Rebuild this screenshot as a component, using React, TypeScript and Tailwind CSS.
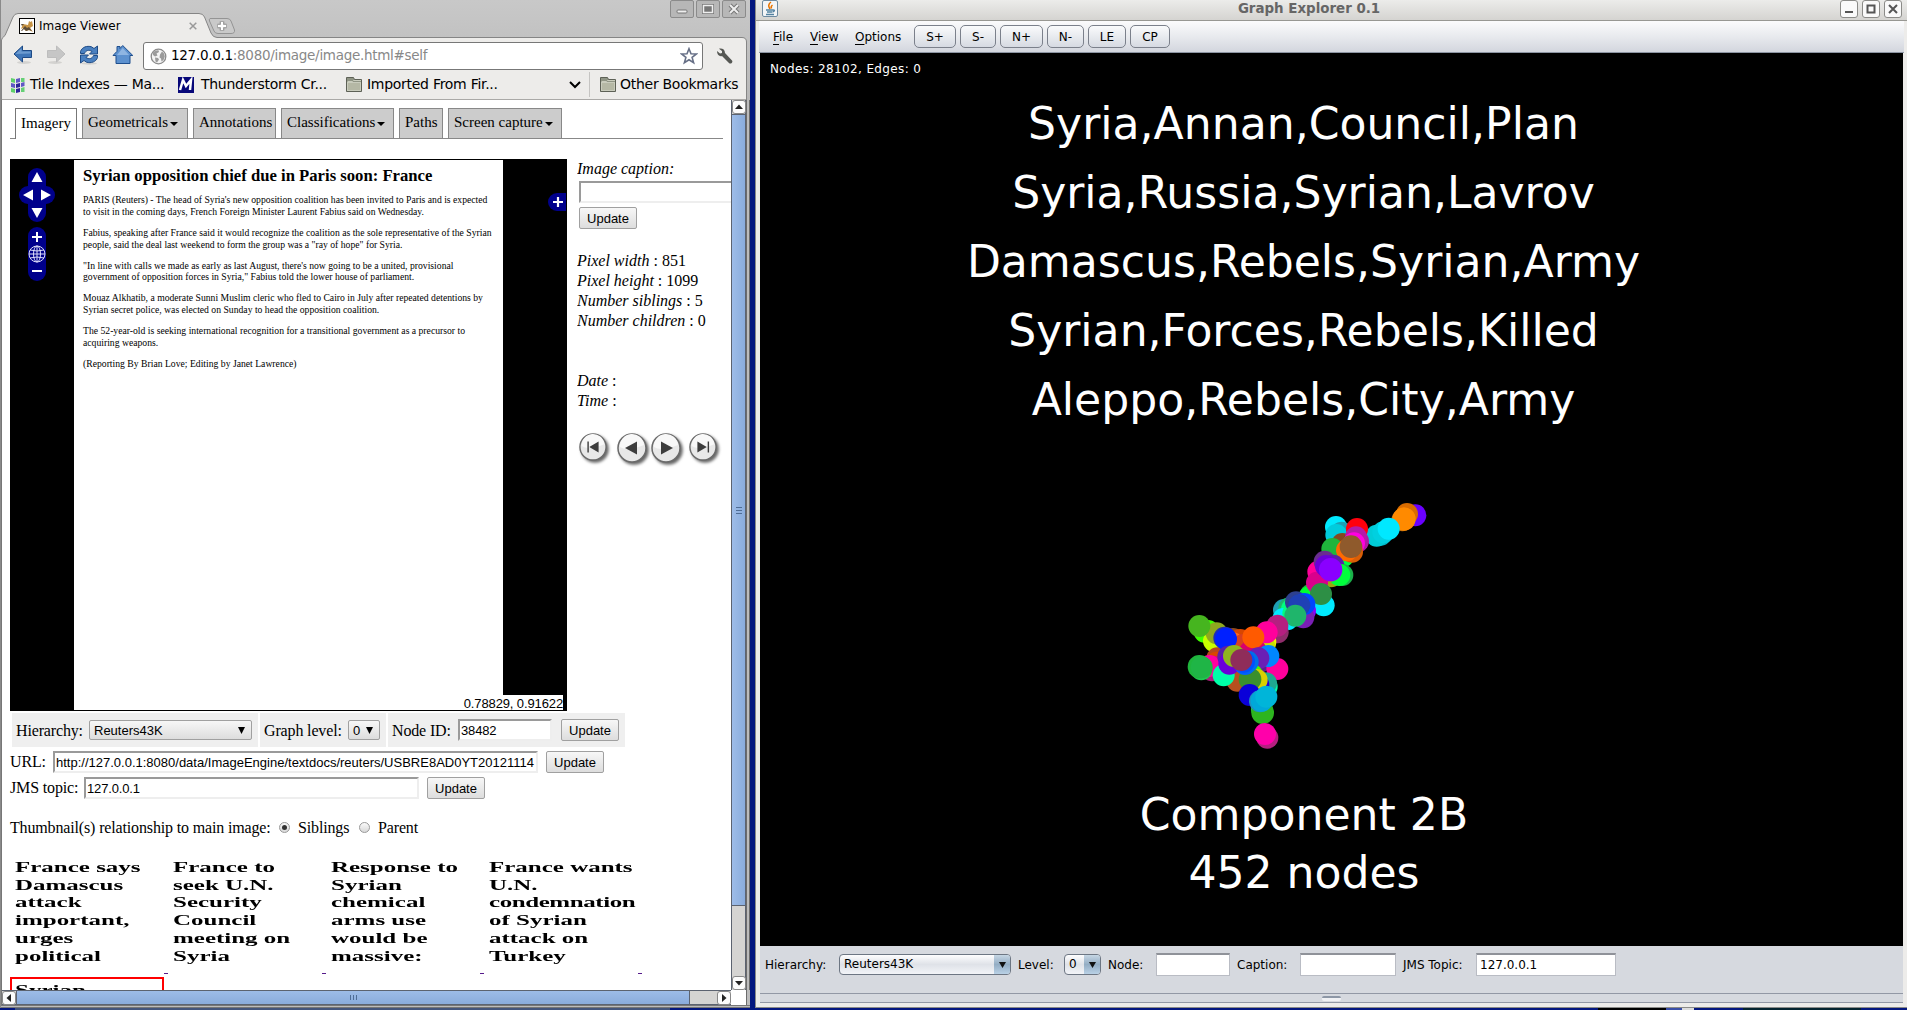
import React from "react";

const serif = "font-['Liberation_Serif',serif]";
const arial = "font-['Liberation_Sans',sans-serif]";
const dejavu = "font-['DejaVu_Sans',sans-serif]";

function Folder() {
  return (
    <svg width="16" height="15" viewBox="0 0 16 15" className="shrink-0">
      <path d="M.5 14.5V.5h7l1 2h7v12z" fill="#8f9484" stroke="#5d6156" />
      <path d="M1.5 4.500h5l1-1h7.500" fill="none" stroke="#c9ccbd" />
      <rect x="1.500" y="5.500" width="13" height="8" fill="#b5b8a5" stroke="#c9ccbd" />
    </svg>
  );
}

function Globe() {
  return (
    <svg width="17" height="17" viewBox="0 0 17 17" className="shrink-0">
      <circle cx="8.500" cy="8.500" r="7.300" fill="#f4f4f4" stroke="#8b8b8b" strokeWidth="1.300" />
      <path d="M3 4.500Q5 2 8.500 2.200L9 4 6.500 5.500 7.500 7.500 5 8.500 3 7zM5 9.500l3 .5 1 1.500-2 3-1.500-1zM10 6.500l2-3 2 2 .8 3-1.300 3.500-2 1.500-.5-3-1.500-1z" fill="#9b9b9b" />
    </svg>
  );
}

function BackArrow({ muted = false }: { muted?: boolean }) {
  return (
    <svg width="20" height="20" viewBox="0 0 20 20" className={muted ? "shrink-0 -scale-x-100" : "shrink-0"}>
      <ellipse cx="11" cy="17.500" rx="7" ry="1.500" fill="#d3d2d0" />
      <path d="M1 9L9.500 1v4.500h9v7h-9V17z" fill={muted ? "#c6c6c6" : "#3f76b8"} stroke={muted ? "#bdbdbd" : "#1d4a86"} />
      {!muted && <path d="M2.500 9L8.500 3.300v3.200h9v2z" fill="#6c9bd0" />}
    </svg>
  );
}

function Reload() {
  return (
    <svg width="20" height="20" viewBox="0 0 20 20" className="shrink-0">
      <ellipse cx="10" cy="18.500" rx="8" ry="1.200" fill="#d3d2d0" />
      <path d="M1.500 8.500V6.500C3 2 8 .5 12.500 1.800L15 3.500 18.500 1v8h-8L13 6.500C10 4.500 7 5 5.500 8.500z" fill="#4a80c0" stroke="#1d4a86" />
      <path d="M18.500 10.500v2c-1.500 4.500-6.500 6-11 4.700L5 15.500 1.500 18v-8h8L7 12.500c3 2 6 1.500 7.500-2z" fill="#4a80c0" stroke="#1d4a86" />
    </svg>
  );
}

function House() {
  return (
    <svg width="22" height="20" viewBox="0 0 22 20" className="shrink-0">
      <path d="M4 18.500v-8H1L5 6.300V1.500h3v2l2.700-3L20.800 10.500H18v8z" fill="#5d91cf" stroke="#1f4f8e" />
      <path d="M5 10l5.700-7 6.300 7z" fill="#8fb5e2" />
    </svg>
  );
}

function Wrench() {
  return (
    <svg width="17" height="17" viewBox="0 0 17 17" className="shrink-0">
      <path d="M1 3l3 2.500L6 5V3L3 .8C6 0 9 1.500 9 5l7 7.500c1.300 1.500-1 4-2.800 2.700L6 8C3.500 9 1 6.500 1 3z" fill="#555753" />
    </svg>
  );
}

function FavCat() {
  return (
    <svg width="16" height="16" viewBox="0 0 16 16" className="shrink-0">
      <rect x=".5" y=".5" width="15" height="15" fill="#fff" stroke="#000" />
      <path d="M2 11l2-5 5 1 1-4 1.500 1L13 3l1 5-3 2 3 4-4-2-3 1-3-3z" fill="#c69345" />
      <path d="M2 13l4-5 2 2 2-1 3 4-3-1-3 1-2-2-2 2zM2 6l3 0-2 2z" fill="#5b4b38" />
    </svg>
  );
}

function Tiles() {
  return (
    <svg width="14" height="16" viewBox="0 0 14 16" className="shrink-0">
      <path d="M0 1l4 1v4L0 5zM0 11l4 1v4l-4-1z" fill="#5fd06a" />
      <path d="M0 6l4 1v4l-4-1zM5 2l4-1v4L5 6zM10 6l3.500-1v4L10 10z" fill="#5f57c4" />
      <path d="M5 7l4-1v4l-4 1zM5 12l4-1v4l-4 1z" fill="#2d2499" />
      <path d="M10 1l3.500 0v4L10 5zM10 11l3.500-1v5l-3.500 0z" fill="#65cf75" />
    </svg>
  );
}

function WinButton({ kind }: { kind: "min" | "max" | "close" }) {
  return (
    <div className="flex h-[18px] w-6 items-center justify-center rounded-[2px] border border-[#8b8b8b] bg-[#b7b7b7]">
      <svg width="14" height="12" viewBox="0 0 14 12">
        {kind === "min" && <rect x="2" y="7" width="10" height="3" rx="1" fill="#eee" stroke="#777" />}
        {kind === "max" && <path d="M2.500 2.500h9v7h-9zM5 5h4v2H5z" fill="none" stroke="#777" strokeWidth="3" />}
        {kind === "max" && <path d="M2.500 2.500h9v7h-9z" fill="none" stroke="#eee" strokeWidth="1.500" />}
        {kind === "close" && <path d="M3 2l8 8M11 2l-8 8" stroke="#777" strokeWidth="4" />}
        {kind === "close" && <path d="M3 2l8 8M11 2l-8 8" stroke="#eee" strokeWidth="2" />}
      </svg>
    </div>
  );
}

function ChromeHeader() {
  return (
    <div className="relative h-[100px] bg-[#bcbcbc] bg-linear-to-b from-[#c8c8c8] to-[#b8b8b8]">
      <svg width="750" height="100" viewBox="0 0 750 100" className="absolute inset-0">
        <path d="M1.500 100V40Q2 37.500 5 35.500L13 17Q14.500 13.500 18 13.500H199Q203 13.500 204.500 17L211 33Q213 37.500 217 37.500H742Q746.500 37.500 746.500 42V100z" fill="#edecea" stroke="#858585" />
        <path d="M210 18.500H227Q230 18.500 231 21L234.500 30Q235 33.500 231 33.500H218Q215 33.500 214 31L209.500 21Q209 18.500 210 18.500z" fill="#c9c9c9" stroke="#949494" />
        <path d="M222 21.500v9M217.500 26h9" stroke="#888" strokeWidth="4.500" />
        <path d="M222 22v8M218 26h8" stroke="#fff" strokeWidth="2.400" />
        <path d="M2 99.500H746" stroke="#aaa9a7" />
      </svg>
      <div className={`relative flex h-full flex-col ${dejavu}`}>
        <div className="flex h-[38px]">
          <div className="flex w-[198px] items-center pt-[14px] pl-[19px]">
            <FavCat />
            <span className="ml-1 w-[150px] text-[12px] tracking-[-0.05px] whitespace-nowrap">Image Viewer</span>
            <svg width="8" height="8" viewBox="0 0 8 8" className="shrink-0">
              <path d="M.7.7l6.600 6.600M7.300.7L.7 7.300" stroke="#999" strokeWidth="1.500" />
            </svg>
          </div>
          <div className="ml-auto flex gap-[2px] pr-1">
            <WinButton kind="min" />
            <WinButton kind="max" />
            <WinButton kind="close" />
          </div>
        </div>
        <div className="flex h-[32px] items-end pl-[13px]">
          <div className="flex h-[25px] gap-[13px]">
            <BackArrow />
            <BackArrow muted />
            <Reload />
            <House />
          </div>
          <div className="ml-[9px] flex h-[28px] w-[560px] items-center rounded-[3px] border border-[#777] bg-white pl-[6px]">
            <Globe />
            <span className="ml-[4px] pb-px text-[13.500px] tracking-[-0.29px] whitespace-nowrap text-[#888]">
              <span className="text-black">127.0.0.1</span>:8080/image/image.html#self
            </span>
            <svg width="18" height="18" viewBox="0 0 18 18" className="mr-1 ml-auto">
              <path d="M9 1.700l2 5 5.300.3-4.200 3.400 1.500 5.300L9 12.800l-4.600 2.900 1.500-5.300L1.700 7 7 6.700z" fill="#fff" stroke="#666f86" strokeWidth="1.600" />
            </svg>
          </div>
          <div className="h-[22px] pl-[13px]"><Wrench /></div>
        </div>
        <div className="flex h-[29px] items-center pl-[11px] text-[14px] tracking-[-0.28px] whitespace-nowrap">
          <div className="flex w-[167px] items-center gap-[5px]"><Tiles />Tile Indexes — Ma...</div>
          <div className="flex w-[168px] items-center gap-[7px]">
            <svg width="16" height="16" viewBox="0 0 16 16" className="shrink-0">
              <rect width="16" height="16" fill="#080879" />
              <path d="M2 13L5 3l3 6 5-6-1 10" fill="none" stroke="#fff" strokeWidth="2.500" />
            </svg>
            Thunderstorm Cr...
          </div>
          <div className="flex w-[223px] items-center gap-[5px]"><Folder />Imported From Fir...</div>
          <svg width="12" height="8" viewBox="0 0 12 8"><path d="M1 1l5 5 5-5" fill="none" stroke="#000" strokeWidth="2" /></svg>
          <div className="ml-[8px] h-[25px] w-px bg-[#c5c4c2]" />
          <div className="ml-[10px] flex items-center gap-[4px]"><Folder />Other Bookmarks</div>
        </div>
      </div>
    </div>
  );
}

const tabs = [
  { label: "Imagery", menu: false, width: "w-[62px]" },
  { label: "Geometricals", menu: true, width: "w-[106px]" },
  { label: "Annotations", menu: false, width: "w-[83px]" },
  { label: "Classifications", menu: true, width: "w-[113px]" },
  { label: "Paths", menu: false, width: "w-[44px]" },
  { label: "Screen capture", menu: true, width: "w-[114px]" },
];

function PageTabs() {
  return (
    <div className="flex h-[31px] w-[713px] border-b border-[#888] pl-[5px]">
      {tabs.map((t, i) => (
        <div
          key={t.label}
          className={`mr-[5px] flex items-center pb-[2px] pl-[5px] text-[15px] whitespace-nowrap ${t.width} ${
            i === 0 ? "h-[31px] border border-b-0 border-[#777] bg-white" : "h-[30px] border border-b-0 border-[#888] bg-[#ccc]"
          }`}
        >
          {t.label}
          {t.menu && <svg width="8" height="4" viewBox="0 0 8 4" className="mt-[2px] ml-[2px]"><path d="M0 0h8L4 4z" /></svg>}
        </div>
      ))}
    </div>
  );
}

function Update() {
  return (
    <div className={`flex h-[22px] w-[58px] items-center justify-center rounded-[2px] border border-[#a0a0a0] bg-linear-to-b from-[#f7f7f7] to-[#dddddd] pt-px text-[13px] ${arial}`}>
      Update
    </div>
  );
}

function Field({ className, children }: { className: string; children?: React.ReactNode }) {
  return (
    <div className={`flex items-center overflow-hidden border-2 border-t-[#9a9a9a] border-r-[#eee] border-b-[#eee] border-l-[#9a9a9a] bg-white pt-px pl-px text-[13px] whitespace-nowrap ${arial} ${className}`}>
      {children}
    </div>
  );
}

function Select({ className, children }: { className: string; children: React.ReactNode }) {
  return (
    <div className={`flex h-[20px] items-center justify-between rounded-[2px] border border-[#a0a0a0] bg-linear-to-b from-[#f7f7f7] to-[#dddddd] text-[13px] ${arial} ${className}`}>
      <span className="pt-px">{children}</span>
      <svg width="7" height="7" viewBox="0 0 7 7"><path d="M0 0h7L3.500 7z" /></svg>
    </div>
  );
}

function PanZoom() {
  return (
    <svg width="64" height="140" viewBox="0 0 64 140">
      <g fill="#00008b">
        <rect x="18" y="8" width="18" height="54" rx="9" />
        <rect x="9" y="26" width="36" height="18" rx="9" />
        <rect x="18" y="67" width="18" height="54" rx="9" />
      </g>
      <path d="M27 12l5.500 10h-11zM27 58l5.500-10h-11zM13 35l10-5.500v11zM41 35l-10-5.500v11z" fill="#fff" />
      <path d="M22 77h10M27 72v10M22 111h10" stroke="#fff" strokeWidth="2" />
      <g fill="none" stroke="#dcdcf8" strokeWidth="1">
        <circle cx="27" cy="94" r="8" />
        <ellipse cx="27" cy="94" rx="3.500" ry="8" />
        <path d="M27 86v16M19 94h16M20 90q7 2 14 0M20 98q7-2 14 0" />
      </g>
    </svg>
  );
}

const story = [
  ["PARIS (Reuters) - The head of Syria's new opposition coalition has been invited to Paris and is expected", "to visit in the coming days, French Foreign Minister Laurent Fabius said on Wednesday."],
  ["Fabius, speaking after France said it would recognize the coalition as the sole representative of the Syrian", "people, said the deal last weekend to form the group was a \"ray of hope\" for Syria."],
  ["\"In line with calls we made as early as last August, there's now going to be a united, provisional", "government of opposition forces in Syria,\" Fabius told the lower house of parliament."],
  ["Mouaz Alkhatib, a moderate Sunni Muslim cleric who fled to Cairo in July after repeated detentions by", "Syrian secret police, was elected on Sunday to head the opposition coalition."],
  ["The 52-year-old is seeking international recognition for a transitional government as a precursor to", "acquiring weapons."],
  ["(Reporting By Brian Love; Editing by Janet Lawrence)"],
];

function Viewer() {
  return (
    <div className="relative flex h-[552px] w-[557px] border-y border-black bg-black">
      <div className="w-[64px]"><PanZoom /></div>
      <div className="h-[550px] w-[429px] bg-white pl-[9px]">
        <h1 className="mt-[5px] h-[21px] text-[16.670px] leading-[21px] font-bold whitespace-nowrap">Syrian opposition chief due in Paris soon: France</h1>
        <div className="mt-[8px] flex flex-col gap-[9.200px] text-[9.680px] leading-[11.800px] whitespace-nowrap">
          {story.map((p) => (
            <p key={p[0]}>{p.map((l) => <span key={l} className="block">{l}</span>)}</p>
          ))}
        </div>
      </div>
      <div className="mt-[33px] ml-[45px] flex h-[18px] w-[18px] items-center justify-center rounded-l-full bg-[#00008b] pl-[2px]">
        <svg width="10" height="10"><path d="M0 5h10M5 0v10" stroke="#fff" strokeWidth="2.200" /></svg>
      </div>
      <div className={`absolute right-1 bottom-0 h-[15px] bg-white text-[13px] leading-[17px] tracking-[-0.12px] ${arial}`}>0.78829, 0.91622</div>
    </div>
  );
}

function Round({ size, d }: { size: number; d: string }) {
  return (
    <svg width={size} height={size} viewBox="0 0 30 30" className="shrink-0 overflow-visible drop-shadow-[2px_2px_1.500px_#666]">
      <circle cx="15" cy="15" r="14" fill="#e8e8e8" stroke="#6b6b6b" strokeWidth="1.500" />
      <path d="M3 14Q10 19 27 12A12 12 0 0 0 3 14" fill="#f8f8f8" />
      <path d={d} fill="#3d3d3d" />
    </svg>
  );
}

function SidePanel() {
  return (
    <div className="ml-[10px] w-[154px] overflow-hidden text-[16px] leading-5 whitespace-nowrap">
      <div className="h-[22px] italic">Image caption:</div>
      <Field className="ml-[2px] h-[22px] w-[170px]" />
      <div className="mt-[4px] ml-[2px]"><Update /></div>
      <div className="mt-[22px]">
        <div><i>Pixel width</i> : 851</div>
        <div><i>Pixel height</i> : 1099</div>
        <div><i>Number siblings</i> : 5</div>
        <div><i>Number children</i> : 0</div>
      </div>
      <div className="mt-[40px]">
        <div><i>Date</i> :</div>
        <div><i>Time</i> :</div>
      </div>
      <div className="mt-[17px] flex h-[38px] items-center pl-[2px]">
        <Round size={28} d="M9 9h1.500v12H9zM21 9v12l-10-6z" />
        <div className="ml-[10px] flex gap-[4px] pt-[2px]">
          <Round size={30} d="M20 8.500v13L8 15z" />
          <Round size={30} d="M10 8.500v13L22 15z" />
        </div>
        <div className="ml-[8px]"><Round size={28} d="M20 9h1.500v12H20zM9 9v12l10-6z" /></div>
      </div>
    </div>
  );
}

function Radio({ on = false }: { on?: boolean }) {
  return (
    <div className="mb-[2px] flex h-[11px] w-[11px] items-center justify-center rounded-full border border-[#999] bg-linear-to-b from-[#fafafa] to-[#d8d8d8]">
      {on && <div className="h-[5px] w-[5px] rounded-full bg-[#333]" />}
    </div>
  );
}

function Controls() {
  return (
    <div className="text-[16px] tracking-[-0.15px] whitespace-nowrap">
      <div className="mt-[2px] flex h-[34px] gap-[2px] pl-[2px]">
        <div className="flex w-[246px] items-center bg-[#efefef] pl-[4px]">
          <span className="w-[73px] pt-px">Hierarchy:</span>
          <Select className="w-[163px] tracking-normal pr-[6px] pl-[4px]">Reuters43K</Select>
        </div>
        <div className="flex w-[126px] items-center bg-[#efefef] pl-[4px]">
          <span className="w-[84px] pt-px">Graph level:</span>
          <Select className="w-[32px] tracking-normal pr-[6px] pl-[4px]">0</Select>
        </div>
        <div className="flex w-[237px] items-center bg-[#efefef] pl-[4px]">
          <span className="w-[66px] pt-px">Node ID:</span>
          <Field className="h-[22px] w-[94px]">38482</Field>
          <div className="ml-[9px] tracking-normal"><Update /></div>
        </div>
      </div>
      <div className="mt-[4px] flex h-[22px] items-center">
        <span className="w-[43px]">URL:</span>
        <Field className="h-[22px] w-[485px] tracking-normal">http://127.0.0.1:8080/data/ImageEngine/textdocs/reuters/USBRE8AD0YT20121114</Field>
        <div className="ml-[8px] tracking-normal"><Update /></div>
      </div>
      <div className="mt-[4px] flex h-[22px] items-center">
        <span className="w-[74px]">JMS topic:</span>
        <Field className="h-[22px] w-[335px]">127.0.0.1</Field>
        <div className="ml-[8px] tracking-normal"><Update /></div>
      </div>
      <div className="mt-[18px] flex h-[22px] items-center">
        <span className="w-[269px]">Thumbnail(s) relationship to main image:</span>
        <Radio on />
        <span className="w-[69px] pl-[8px]">Siblings</span>
        <Radio />
        <span className="pl-[8px]">Parent</span>
      </div>
    </div>
  );
}

const thumbs = [
  ["France says", "Damascus", "attack", "important,", "urges", "political"],
  ["France to", "seek U.N.", "Security", "Council", "meeting on", "Syria"],
  ["Response to", "Syrian", "chemical", "arms use", "would be", "massive:"],
  ["France wants", "U.N.", "condemnation", "of Syrian", "attack on", "Turkey"],
];

function Thumbs() {
  return (
    <div className="mt-[18px] font-bold">
      <div className="flex h-[120px]">
        {thumbs.map((lines) => (
          <div key={lines[0]} className="flex h-[117px] w-[158px] justify-between pl-[4.500px]">
            <div className="w-[80px] origin-left scale-x-[1.665] pt-[2px] text-[15px] leading-[17.700px] whitespace-nowrap">
              {lines.map((l) => <div key={l} className={l === "condemnation" ? "tracking-[-0.250px]" : ""}>{l}</div>)}
            </div>
            <div className="mt-[116px] h-px w-[4px] shrink-0 bg-[#551a8b]" />
          </div>
        ))}
      </div>
      <div className="h-[30px] w-[154px] border-2 border-[#f00] bg-white pt-[3px] pl-[3px]">
        <div className="w-[80px] origin-left scale-x-[1.665] text-[15px] leading-[17px]">Syrian</div>
      </div>
    </div>
  );
}

function ArrowBox({ d }: { d: string }) {
  return (
    <div className="flex h-[14px] w-[14px] shrink-0 items-center justify-center rounded-[3px] border border-[#888] bg-[#fcfcfc]">
      <svg width="8" height="8" viewBox="0 0 8 8" className="shrink-0"><path d={d} fill="#222" /></svg>
    </div>
  );
}

function Browser() {
  return (
    <div className="flex h-[1008px] w-[750px] flex-col overflow-hidden border-l border-[#8a8a8a] bg-[#bcbcbc]">
      <div className="-ml-px"><ChromeHeader /></div>
      <div className="flex h-[890px] border-l border-[#777]">
        <div className={`h-[890px] w-[729px] overflow-hidden bg-white pt-[8px] pl-[8px] text-black ${serif}`}>
          <PageTabs />
          <div className="mt-[20px] flex">
            <Viewer />
            <SidePanel />
          </div>
          <Controls />
          <Thumbs />
        </div>
        <div className="flex w-[15px] flex-col items-center border-x border-[#5c6370] bg-[#d5d4d2]">
          <ArrowBox d="M4 1.500l4 4.500H0z" />
          <div className="flex h-[792px] w-full items-center justify-center border-y border-[#5c6370] bg-linear-to-r from-[#9dbce8] to-[#8aacdc]">
            <div className="h-[7px] w-[6px] border-y border-[#4f6d96]"><div className="mt-[2px] h-px bg-[#4f6d96]" /></div>
          </div>
          <div className="flex-1" />
          <ArrowBox d="M0 2h8L4 6.500z" />
        </div>
        <div className="flex-1 border-x border-[#6b6b6b] bg-[#bcbcbc]" />
      </div>
      <div className="flex h-[15px] border-l border-[#777] bg-white">
        <div className="flex w-[729px] items-center border-y border-[#5c6370] bg-[#d5d4d2]">
          <ArrowBox d="M6 0v8L1.500 4z" />
          <div className="flex h-full w-[674px] items-center justify-center border-x border-[#5c6370] bg-linear-to-b from-[#9dbce8] to-[#8aacdc]">
            <div className="h-[5px] w-[7px] border-x border-[#4f6d96]"><div className="ml-[2px] h-full w-px bg-[#4f6d96]" /></div>
          </div>
          <div className="flex-1" />
          <ArrowBox d="M2 0v8l4.500-4z" />
        </div>
        <div className="ml-auto w-[4px] border-l border-[#6b6b6b] bg-[#bcbcbc]" />
      </div>
      <div className="h-[3px] border-y border-[#777] bg-[#bcbcbc]" />
    </div>
  );
}

type Node = [number, number, string, number?];
const nodes: Node[] = [
  [736, 106, "#6a00ff"], [711, 102, "#d96c00"], [697, 121, "#b36b12"], [702, 117, "#ff8a00", 35],
  [632, 164, "#00b8c8"], [620, 167, "#00ccd8"], [640, 157, "#00d0e0"], [656, 146, "#00e8ff"],
  [498, 141, "#00eaff"], [515, 158, "#1ba0b5"], [499, 165, "#00ccdd"],
  [520, 228, "#00ff40"], [517, 192, "#85481f"], [561, 147, "#ff000c"], [564, 184, "#b01aa0"], [558, 172, "#b51aa8"], [552, 190, "#ff00e0"],
  [487, 207, "#1fb53c"], [546, 215, "#d95d06"], [531, 211, "#ff6a00"], [543, 200, "#8f5a2c", 34],
  [445, 275, "#ff0099"], [464, 245, "#6a2d8f"], [490, 257, "#5a1fa8"], [517, 285, "#1bb04a"],
  [483, 289, "#9aa80f"], [508, 285, "#00ff3c"], [475, 274, "#b58f1f"], [422, 345, "#1fb53c"], [418, 352, "#00ff30"],
  [441, 308, "#d9008c"], [468, 258, "#6a00d9"], [482, 269, "#8a00ff", 35],
  [461, 376, "#00eaff"], [453, 342, "#2d8f45"],
  [342, 390, "#1fa0b5"], [358, 385, "#1fb56b"], [366, 388, "#00ff80"], [340, 417, "#00eaff"], [352, 418, "#00eaff"],
  [370, 400, "#00ff80"], [405, 392, "#8a00ff"], [400, 412, "#7a1fb5"], [378, 367, "#2d408f"], [403, 372, "#0046ff"], [388, 376, "#1f40b5"], [376, 407, "#1fb56b"],
  [323, 457, "#8f2d6b"], [322, 437, "#b51f80"],
  [114, 453, "#40ff00"], [104, 455, "#40ff00"], [286, 486, "#f2f200"], [283, 500, "#c8e000"],
  [132, 483, "#c8ff00"], [140, 460, "#8fa81f"], [88, 438, "#46b51f"],
  [189, 477, "#8f4a1f"], [211, 480, "#d94600"], [188, 490, "#ff6a1f"], [142, 535, "#b5461f"], [140, 548, "#d94600"], [128, 560, "#d90086"], [126, 571, "#a81f7a"], [118, 558, "#ff00a0"],
  [220, 495, "#d9401f"], [240, 515, "#d9006b"], [256, 510, "#d9006b"], [290, 457, "#ff009c"], [250, 472, "#ff5a00"], [164, 474, "#1f2db5", 34], [168, 477, "#0020ff"],
  [270, 545, "#5a1f8f"], [322, 567, "#ff009c"], [295, 528, "#0086ff"], [265, 535, "#6a1fb5"],
  [202, 602, "#b5501f"], [161, 586, "#00ffa8"], [175, 530, "#5a1fa8"], [178, 551, "#6a00d9"],
  [94, 568, "#1fc850"], [88, 560, "#1fb53c", 35], [95, 562, "#1fb546"],
  [290, 620, "#00ffa8"], [288, 610, "#1fa88f"], [265, 615, "#2000d9"], [246, 585, "#40ff00"], [260, 600, "#d9d000"], [240, 598, "#3a8f2d", 34],
  [225, 552, "#0060ff"], [233, 545, "#0070e8"], [192, 528, "#8fb51f"], [222, 545, "#0050ff"], [214, 540, "#8f2d5a"],
  [276, 688, "#1fd040"], [278, 698, "#2db51f", 34], [239, 645, "#0a00d9"], [270, 664, "#1f90c0"], [275, 662, "#00a8d9"], [289, 650, "#00b5d9"],
  [292, 773, "#b51f80"], [285, 762, "#ff00aa"],
];

const topics = [
  "Syria,Annan,Council,Plan",
  "Syria,Russia,Syrian,Lavrov",
  "Damascus,Rebels,Syrian,Army",
  "Syrian,Forces,Rebels,Killed",
  "Aleppo,Rebels,City,Army",
];

function Canvas() {
  return (
    <div className="flex h-[893px] w-[1143px] flex-col overflow-hidden bg-black text-white">
      <div className="h-[36px] pt-[8px] pl-[10px] text-[12px] leading-[16px] tracking-[0.370px]">Nodes: 28102, Edges: 0</div>
      <div className="w-[1087px] text-center text-[44.100px] leading-[69px] whitespace-nowrap">
        {topics.map((t) => <div key={t}>{t}</div>)}
      </div>
      <svg width="280" height="280" viewBox="0 0 840 840" className="mt-[46px] ml-[410px] shrink-0">
        {nodes.map(([x, y, c, r], i) => <circle key={i} cx={x} cy={y} r={r ?? 33} fill={c} />)}
      </svg>
      <div className="mt-[26px] w-[1088px] text-center text-[44.100px] leading-[58px] whitespace-nowrap">
        <div>Component 2B</div>
        <div>452 nodes</div>
      </div>
    </div>
  );
}

function FrameButton({ d }: { d: string }) {
  return (
    <div className="flex h-[18px] w-[18px] items-center justify-center rounded-[3px] border border-[#8b8b88] bg-[#fafafa]">
      <svg width="10" height="10" viewBox="0 0 10 10"><path d={d} fill="none" stroke="#555" strokeWidth="2" /></svg>
    </div>
  );
}

const menus = [
  { key: "F", rest: "ile", width: "w-[37px]" },
  { key: "V", rest: "iew", width: "w-[45px]" },
  { key: "O", rest: "ptions", width: "w-[59px]" },
];
const buttons = [
  { label: "S+", width: "w-[42px]" },
  { label: "S-", width: "w-[36px]" },
  { label: "N+", width: "w-[43px]" },
  { label: "N-", width: "w-[37px]" },
  { label: "LE", width: "w-[38px]" },
  { label: "CP", width: "w-[40px]" },
];

function NimbusSelect({ label, className }: { label: string; className: string }) {
  return (
    <div className={`flex h-[21px] overflow-hidden rounded-[4px] border border-[#6d7683] bg-linear-to-b from-[#fdfdfe] via-[#dfe2e8] to-[#f2f4f8] ${className}`}>
      <span className="flex-1 pl-[4px] leading-[19px]">{label}</span>
      <span className="flex w-[16px] items-center justify-center bg-linear-to-b from-[#c6d6e4] via-[#93adc4] to-[#b9d1e6]">
        <svg width="7" height="6" viewBox="0 0 7 6"><path d="M0 0h7L3.500 6z" fill="#111" /></svg>
      </span>
    </div>
  );
}

function NimbusField({ className, children }: { className: string; children?: React.ReactNode }) {
  return <div className={`h-[23px] border border-t-2 border-[#b9bcc4] border-t-[#8f9299] bg-white pl-[3px] leading-[20px] ${className}`}>{children}</div>;
}

function GraphExplorer() {
  return (
    <div className={`flex h-[1008px] w-[1152px] flex-col border-b border-l border-[#8b8b88] bg-[#edecea] text-[12px] text-black ${dejavu}`}>
      <div className="relative flex h-[21px] justify-between border-b border-[#979792] bg-linear-to-b from-[#ececea] to-[#d5d4d1]">
        <div className="ml-[6px] h-[17px] w-[16px] rounded-[2px] border border-[#6d8aa0] bg-[#f3f5f7]">
          <svg width="14" height="15" viewBox="0 0 14 15">
            <path d="M8 1Q4 4 7 8M9.500 4Q7.500 5.500 8.500 7.500" fill="none" stroke="#e87400" strokeWidth="1.500" />
            <path d="M3 9h7M4 11h5.500M3 13.500h8M10 9q3 0 0 2" fill="none" stroke="#5382a1" strokeWidth="1.300" />
          </svg>
        </div>
        <div className="text-[13.400px] leading-[18px] font-bold text-[#666]">Graph Explorer 0.1</div>
        <div className="flex gap-[4px] pr-[5px]">
          <FrameButton d="M1 8h8" />
          <FrameButton d="M1.500 1.500h7v7h-7z" />
          <FrameButton d="M1 1l8 8M9 1l-8 8" />
        </div>
      </div>
      <div className="ml-[3px] flex h-[32px] w-[1145px] border-b border-[#8d95a3] bg-linear-to-b from-[#fbfbfc] via-[#e8eaee] to-[#d3d6de] pl-[14px]">
        <div className="flex h-[31px] items-center">
          {menus.map((m) => (
            <span key={m.key} className={m.width}><span className="underline underline-offset-[3px]">{m.key}</span>{m.rest}</span>
          ))}
        </div>
        <div className="mt-[4px] flex gap-[4px]">
          {buttons.map((b) => (
            <div key={b.label} className={`flex h-[23px] items-center justify-center rounded-[5px] border border-[#7b808b] bg-linear-to-b from-[#fafbfc] to-[#d6dae2] ${b.width}`}>{b.label}</div>
          ))}
        </div>
      </div>
      <div className="ml-[4px]">
        <Canvas />
        <div className="flex h-[47px] w-[1143px] bg-[#d6d9df] pt-[8px] pl-[5px] whitespace-nowrap">
          <span className="w-[74px] pt-[2px]">Hierarchy:</span>
          <NimbusSelect label="Reuters43K" className="w-[172px]" />
          <span className="ml-[7px] w-[46px] pt-[2px]">Level:</span>
          <NimbusSelect label="0" className="w-[37px]" />
          <span className="ml-[7px] w-[48px] pt-[2px]">Node:</span>
          <NimbusField className="-mt-px w-[74px]" />
          <span className="ml-[7px] w-[63px] pt-[2px]">Caption:</span>
          <NimbusField className="-mt-px w-[96px]" />
          <span className="ml-[7px] w-[73px] pt-[2px]">JMS Topic:</span>
          <NimbusField className="-mt-px w-[140px]">127.0.0.1</NimbusField>
        </div>
        <div className="flex h-[10px] w-[1143px] items-center justify-center border-y border-[#9298a5] bg-[#d6d9df]">
          <div className="h-[5px] w-[19px] rounded-[2px] border-t-2 border-[#8d97a6] bg-[#f0f1f4]" />
        </div>
      </div>
    </div>
  );
}

export default function App() {
  return (
    <div className="h-[1010px] w-[1907px] overflow-hidden bg-[#04177f]">
      <div className="flex justify-between">
        <Browser />
        <GraphExplorer />
      </div>
      <div className="flex h-[2px]">
        <div className="ml-[15px] h-full w-[655px] bg-[#44557c]" />
        <div className="ml-[928px] h-full w-[68px] bg-black" />
        <div className="h-full w-[16px] bg-[#3a4fa8]" />
        <div className="h-full w-[12px] bg-[#ddd]" />
        <div className="ml-[49px] h-full w-[118px] bg-[#04242f]" />
      </div>
    </div>
  );
}
